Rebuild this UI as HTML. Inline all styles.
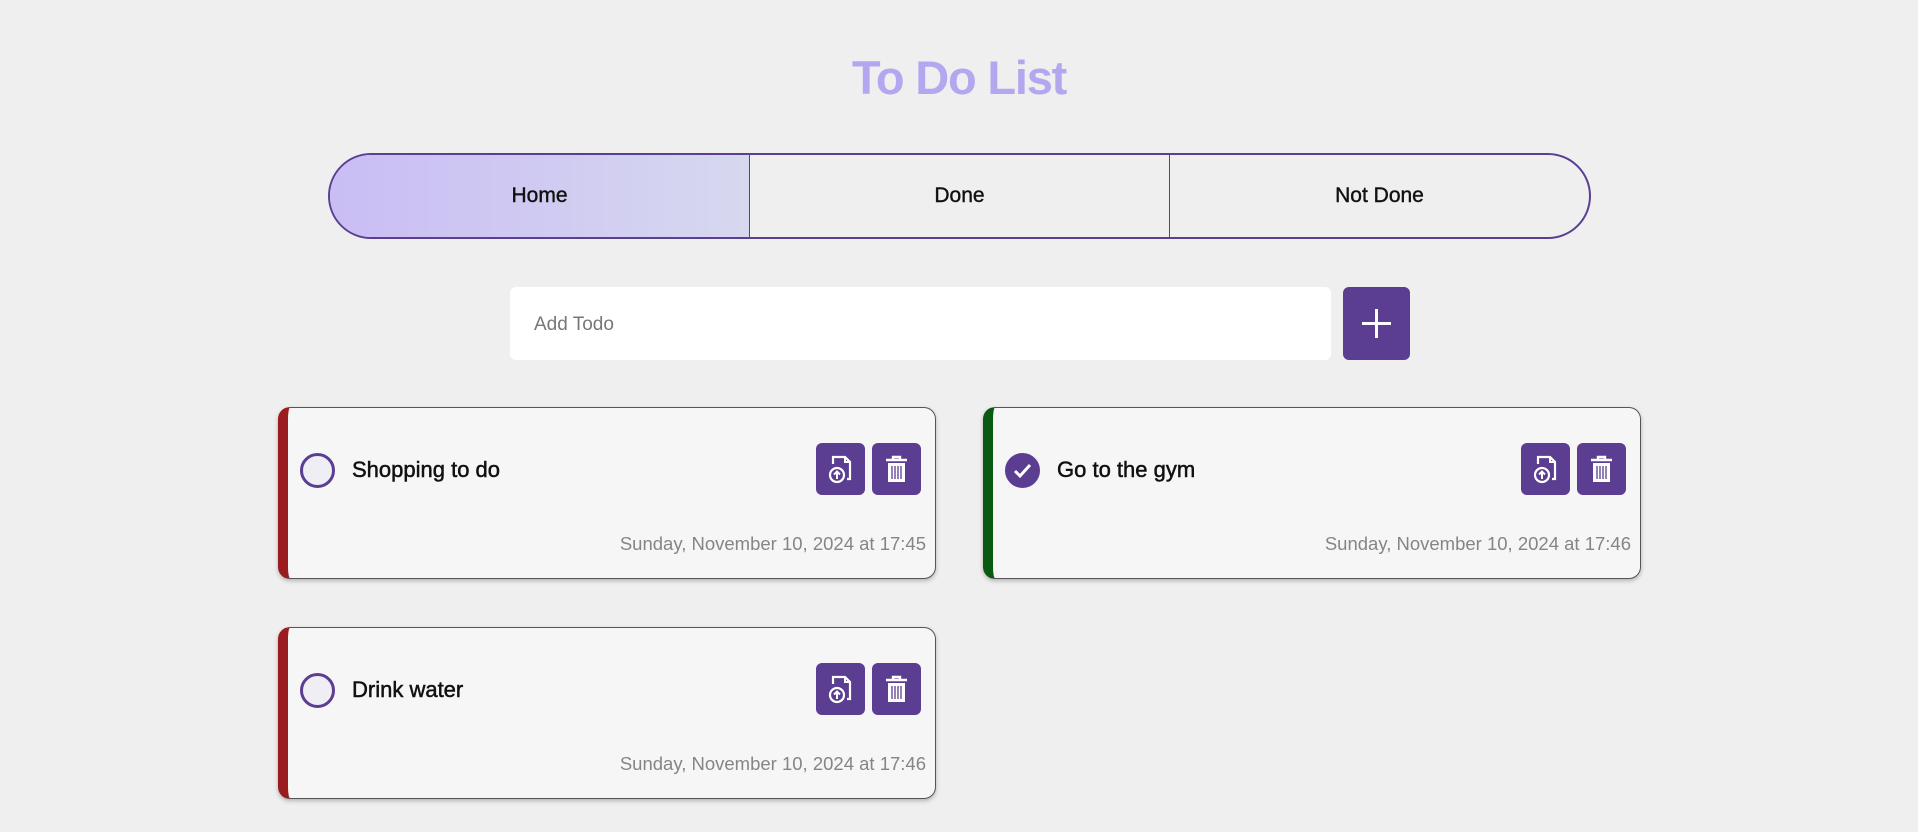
<!DOCTYPE html>
<html><head><meta charset="utf-8"><style>
*{box-sizing:border-box;margin:0;padding:0}
body{width:1918px;height:832px;background:#efefef;font-family:"Liberation Sans",sans-serif;position:relative;overflow:hidden}
h1{position:absolute;left:0;width:1918px;top:50px;text-align:center;font-size:47px;font-weight:900;color:#b5a6f0;letter-spacing:-1.2px}
.tabs{position:absolute;left:328px;top:153px;width:1263px;height:86px;border:2px solid #5b3f92;border-radius:43px;overflow:hidden;display:flex}
.tabs div{flex:1;display:flex;align-items:center;justify-content:center;font-size:21px;color:#111;border-right:1px solid #5b3f92;-webkit-text-stroke:0.4px #111}
.tabs div:last-child{border-right:none}
.tabs .act{background:linear-gradient(90deg,#c9bdf4,#d6d8ef)}
.inp{position:absolute;left:510px;top:287px;width:821px;height:73px;background:#fff;border-radius:6px;font-size:19px;color:#777;padding:27px 0 0 24px}
.add{position:absolute;left:1343px;top:287px;width:67px;height:73px;background:#5b3d91;border-radius:6px}
.add:before{content:"";position:absolute;left:19px;top:35px;width:29px;height:3px;background:#fff}
.add:after{content:"";position:absolute;left:32px;top:22px;width:3px;height:29px;background:#fff}
.card{position:absolute;width:658px;height:172px;background:#f6f6f6;border:1px solid #555;border-left:10px solid #9b1c1f;border-radius:12px;box-shadow:0 2px 4px rgba(0,0,0,.25)}
.card.g{border-left-color:#0b5a12}
.circ{position:absolute;left:12px;top:45px;width:35px;height:35px;border:3px solid #5b3d91;border-radius:50%;background:#efeef4}
.circ.on{background:#5b3d91}
.t{position:absolute;left:64px;top:49px;font-size:22px;color:#111;-webkit-text-stroke:0.5px #111}
.b{position:absolute;top:35px;width:49px;height:52px;background:#5b3d91;border-radius:6px}
.b1{right:70px}.b2{right:14px}
.d{position:absolute;right:9px;top:125px;font-size:18.5px;color:#858585}
</style></head><body>
<h1>To Do List</h1>
<div class="tabs"><div class="act">Home</div><div>Done</div><div>Not Done</div></div>
<div class="inp">Add Todo</div>
<div class="add"></div>

<div class="card" style="left:278px;top:407px">
<div class="circ"></div><div class="t">Shopping to do</div>
<div class="b b1"><svg width="49" height="52" viewBox="0 0 49 52"><path d="M17 21V14h12l5 5v17h-3" fill="none" stroke="#fff" stroke-width="2.2"/><path d="M29 14v5h5" fill="none" stroke="#fff" stroke-width="2"/><circle cx="21" cy="32" r="7" fill="none" stroke="#fff" stroke-width="2.2"/><path d="M21 36v-7M18 31.5l3-3 3 3" fill="none" stroke="#fff" stroke-width="2"/></svg></div>
<div class="b b2"><svg width="49" height="52" viewBox="0 0 49 52"><path d="M14 17h21M21 17v-3h7v3" fill="none" stroke="#fff" stroke-width="2.4"/><rect x="16" y="20" width="17" height="19" fill="#fff"/><path d="M20 23v13M23 23v13M26 23v13M29 23v13" stroke="#5b3d91" stroke-width="1.3"/></svg></div>
<div class="d">Sunday, November 10, 2024 at 17:45</div></div>

<div class="card g" style="left:983px;top:407px">
<div class="circ on"><svg width="29" height="29" viewBox="0 0 29 29"><path d="M7 15l5 5 10-11" fill="none" stroke="#fff" stroke-width="3"/></svg></div><div class="t">Go to the gym</div>
<div class="b b1"><svg width="49" height="52" viewBox="0 0 49 52"><path d="M17 21V14h12l5 5v17h-3" fill="none" stroke="#fff" stroke-width="2.2"/><path d="M29 14v5h5" fill="none" stroke="#fff" stroke-width="2"/><circle cx="21" cy="32" r="7" fill="none" stroke="#fff" stroke-width="2.2"/><path d="M21 36v-7M18 31.5l3-3 3 3" fill="none" stroke="#fff" stroke-width="2"/></svg></div>
<div class="b b2"><svg width="49" height="52" viewBox="0 0 49 52"><path d="M14 17h21M21 17v-3h7v3" fill="none" stroke="#fff" stroke-width="2.4"/><rect x="16" y="20" width="17" height="19" fill="#fff"/><path d="M20 23v13M23 23v13M26 23v13M29 23v13" stroke="#5b3d91" stroke-width="1.3"/></svg></div>
<div class="d">Sunday, November 10, 2024 at 17:46</div></div>

<div class="card" style="left:278px;top:627px">
<div class="circ"></div><div class="t">Drink water</div>
<div class="b b1"><svg width="49" height="52" viewBox="0 0 49 52"><path d="M17 21V14h12l5 5v17h-3" fill="none" stroke="#fff" stroke-width="2.2"/><path d="M29 14v5h5" fill="none" stroke="#fff" stroke-width="2"/><circle cx="21" cy="32" r="7" fill="none" stroke="#fff" stroke-width="2.2"/><path d="M21 36v-7M18 31.5l3-3 3 3" fill="none" stroke="#fff" stroke-width="2"/></svg></div>
<div class="b b2"><svg width="49" height="52" viewBox="0 0 49 52"><path d="M14 17h21M21 17v-3h7v3" fill="none" stroke="#fff" stroke-width="2.4"/><rect x="16" y="20" width="17" height="19" fill="#fff"/><path d="M20 23v13M23 23v13M26 23v13M29 23v13" stroke="#5b3d91" stroke-width="1.3"/></svg></div>
<div class="d">Sunday, November 10, 2024 at 17:46</div></div>
</body></html>
